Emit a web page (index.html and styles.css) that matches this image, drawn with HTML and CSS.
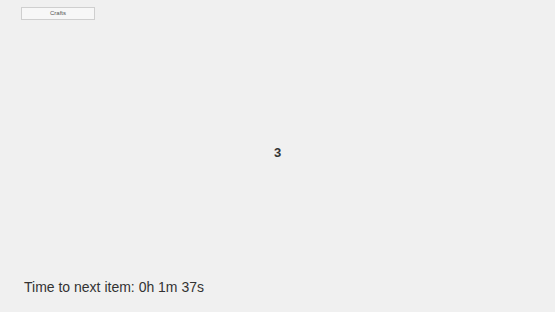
FILE: index.html
```html
<!DOCTYPE html>
<html lang="en">
<head>
    <meta charset="UTF-8">
    <title>Crafts</title>
    <link rel="stylesheet" href="styles.css">
</head>
<body>
    <div class="app">
        <div class="topbar">
            <button class="btn-crafts">Crafts</button>
        </div>
        <div class="counter">3</div>
        <div class="timer">Time to next item: 0h 1m 37s</div>
    </div>
</body>
</html>
```
FILE: styles.css
```css
body {
    margin: 0;
    background: #f0f0f0;
    font-family: 'Liberation Sans', Arial, sans-serif;
    color: #333;
}
.app {
    height: 312px;
    display: flex;
    flex-direction: column;
}
.topbar {
    padding: 7px 0 0 21px;
}
.btn-crafts {
    width: 74px;
    height: 13px;
    padding: 0;
    border: 1px solid #cfcfcf;
    background: #f7f7f7;
    color: #555;
    font-family: 'Liberation Sans', Arial, sans-serif;
    font-size: 6px;
    line-height: 11px;
    display: block;
}
.counter {
    flex: 1;
    display: flex;
    align-items: center;
    justify-content: center;
    font-size: 13px;
    font-weight: bold;
    color: #333;
    padding-top: 5px;
}
.timer {
    font-size: 14px;
    padding: 0 0 17px 24px;
    color: #333;
}
```
